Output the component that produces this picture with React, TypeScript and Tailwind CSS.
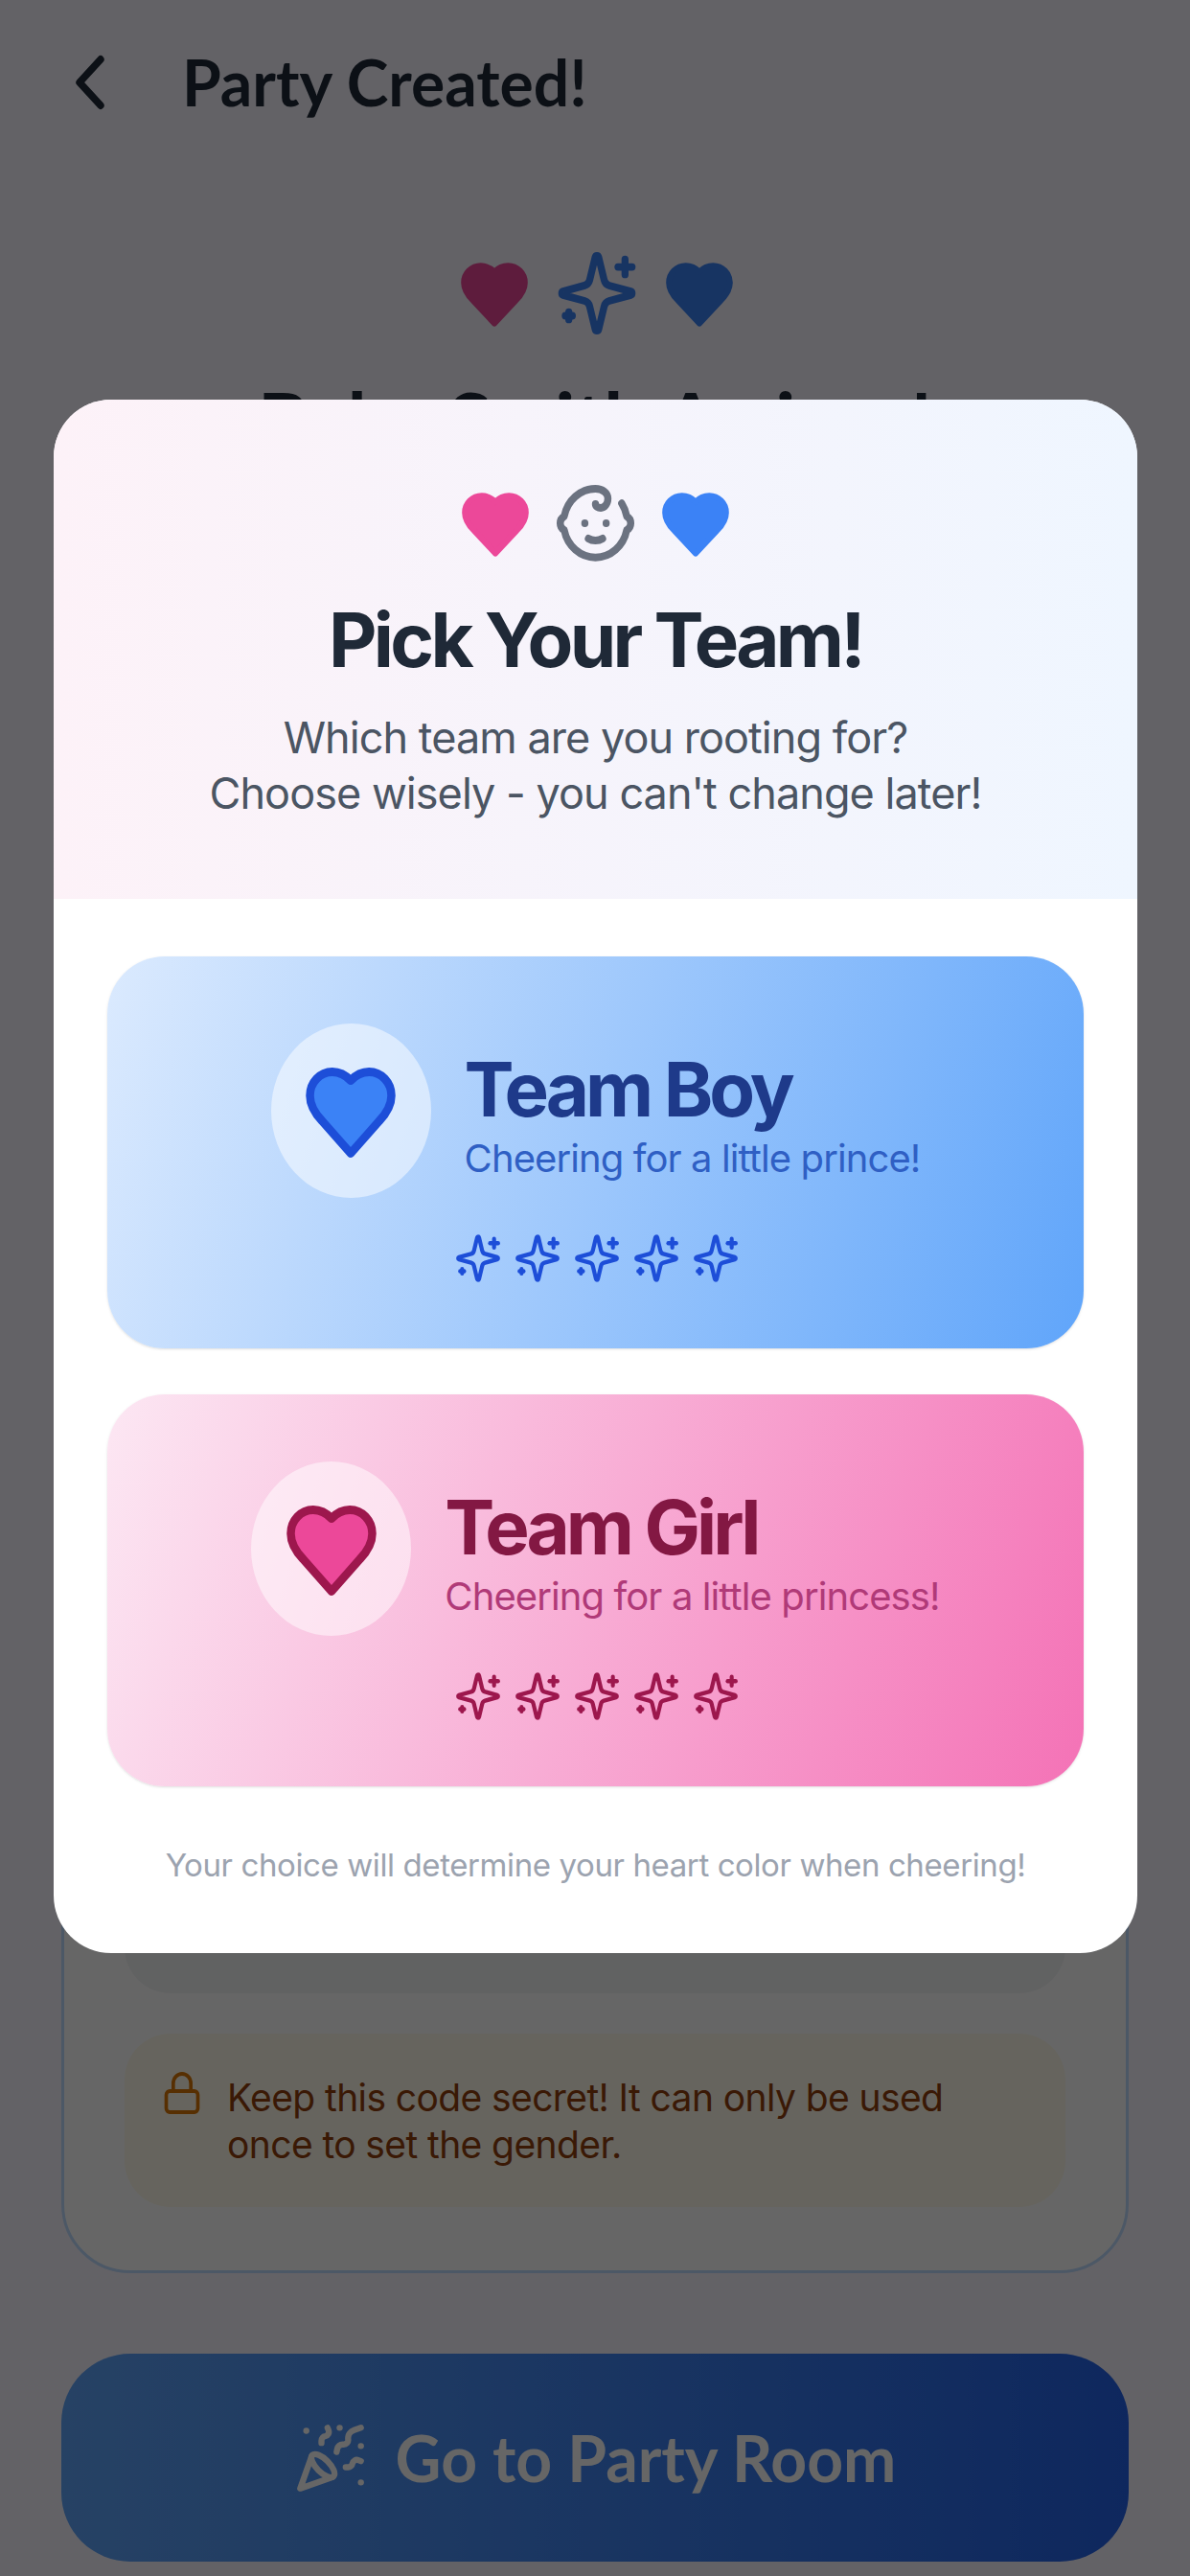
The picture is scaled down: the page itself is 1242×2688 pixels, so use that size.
import { Baby, Lock, PartyPopper } from "lucide-react";

const HEART =
  "M12 21.9 5 14.4C3.5 12.9 2 11.1 2 8.5A5.5 5.5 0 0 1 7.5 3C9.26 3 10.5 3.5 12 5 13.5 3.5 14.74 3 16.5 3A5.5 5.5 0 0 1 22 8.5C22 11.1 20.5 12.9 19 14.4Z";

function Heart({ className }: { className: string }) {
  return (
    <svg viewBox="0 0 24 24" preserveAspectRatio="none" strokeWidth={2} strokeLinejoin="round" strokeLinecap="round" className={className}>
      <path d={HEART} />
    </svg>
  );
}

function Sparkle({ className }: { className: string }) {
  return (
    <svg viewBox="0 0 24 24" preserveAspectRatio="none" fill="none" stroke="currentColor" strokeWidth={2} strokeLinejoin="round" strokeLinecap="round" className={className}>
      <path d="M9.937 15.5A2 2 0 0 0 8.5 14.063l-6.135-1.582a.5.5 0 0 1 0-.962L8.5 9.936A2 2 0 0 0 9.937 8.5l1.582-6.135a.5.5 0 0 1 .963 0L14.063 8.5A2 2 0 0 0 15.5 9.937l6.135 1.581a.5.5 0 0 1 0 .964L15.5 14.063a2 2 0 0 0-1.437 1.437l-1.582 6.135a.5.5 0 0 1-.963 0z" />
      <path d="M20 3v4" />
      <path d="M22 5h-4" />
      <path d="M4 17v2" />
      <path d="M5 18H3" />
    </svg>
  );
}

function Stars({ className }: { className: string }) {
  return (
    <div className="ml-[3px] flex items-center justify-center gap-[12px]">
      {[0, 1, 2, 3, 4].map((i) => (
        <Sparkle key={i} className={className} />
      ))}
    </div>
  );
}

function TeamCard({
  gradient,
  heart,
  title,
  titleColor,
  sub,
  subColor,
  star,
}: {
  gradient: string;
  heart: string;
  title: string;
  titleColor: string;
  sub: string;
  subColor: string;
  star: string;
}) {
  return (
    <div className={`flex h-[409px] w-full flex-col items-center gap-[36px] rounded-[60px] pt-[70px] shadow-sm ${gradient}`}>
      <div className="flex items-center gap-[35px]">
        <div className="flex h-[182px] w-[167px] items-center justify-center rounded-[50%] bg-white/50">
          <Heart className={heart} />
        </div>
        <div className="mt-[12px] flex flex-col">
          <div className={`text-[78px] leading-[88px] font-bold tracking-[-4px] ${titleColor}`}>{title}</div>
          <div className={`text-[40px] leading-[56px] tracking-[-0.9px] ${subColor}`}>{sub}</div>
        </div>
      </div>
      <Stars className={star} />
    </div>
  );
}

export default function App() {
  return (
    <div className="relative h-[2688px] w-[1242px] overflow-hidden bg-[#f8f5ff] font-['Inter',sans-serif]">
      {/* Page underneath */}
      <div className="flex h-full flex-col px-[64px] pb-[15px]">
        <header className="-ml-[14px] mt-[38px] flex h-[96px] items-center gap-[52px]">
          <svg viewBox="0 0 24 24" preserveAspectRatio="none" fill="none" stroke="#1f2937" strokeWidth={2} strokeLinecap="round" strokeLinejoin="round" className="h-[96px] w-[88px]">
            <path d="m15 18-6-6 6-6" />
          </svg>
          <h1 className="font-['Lato',sans-serif] text-[66px] leading-none font-bold text-[#1f2937]">Party Created!</h1>
        </header>
        <div className="mt-[125px] ml-[3px] flex items-center justify-center gap-[25px]">
          <Heart className="h-[76px] w-[76px] fill-[#ec4899] stroke-[#ec4899]" />
          <Sparkle className="h-[94px] w-[88px] text-[#3b82f6]" />
          <Heart className="h-[76px] w-[76px] fill-[#3b82f6] stroke-[#3b82f6]" />
        </div>
        <h2 className="mt-[34px] text-center font-['Lato',sans-serif] text-[81px] leading-[100px] font-bold whitespace-nowrap text-[#1f2937]">Baby Smith Arrives!</h2>
        <div className="mt-[118px] flex min-h-0 flex-1 flex-col rounded-[72px] border-[3px] border-[#bfdbfe] bg-white px-[63px] pt-[60px] pb-[66px]">
          <div className="min-h-0 flex-1 rounded-[48px] bg-[#f3f4f6]" />
          <div className="mt-[42px] flex h-[181px] gap-[25px] rounded-[48px] bg-[#fffbeb] px-[38px] pt-[42px]">
            <Lock className="-mt-[4px] h-[48px] w-[44px] shrink-0 text-[#d97706]" preserveAspectRatio="none" strokeWidth={2} />
            <p className="text-[39px] leading-[49px] tracking-[-0.6px] text-[#92400e]">Keep this code secret! It can only be used once to set the gender.</p>
          </div>
        </div>
        <button className="mt-[84px] flex h-[217px] shrink-0 items-center justify-center gap-[30px] rounded-[72px] bg-gradient-to-r from-[#60a5fa] to-[#2563eb] font-['Lato',sans-serif] text-[66px] font-bold text-white">
          <PartyPopper className="h-[76px] w-[76px]" strokeWidth={2} />
          Go to Party Room
        </button>
      </div>

      {/* Dim layer */}
      <div className="absolute inset-0 bg-black/60" />

      {/* Modal */}
      <div className="absolute top-[417px] left-[56px] w-[1131px] overflow-hidden rounded-[60px] bg-white">
        <div className="flex h-[521px] flex-col items-center bg-gradient-to-r from-[#fdf2f8] to-[#eff6ff] pt-[81px]">
          <div className="flex items-center justify-center gap-[22px]">
            <Heart className="h-[76px] w-[76px] fill-[#ec4899] stroke-[#ec4899]" />
            <Baby className="h-[96px] w-[89px] text-[#6b7280]" preserveAspectRatio="none" strokeWidth={2} />
            <Heart className="h-[76px] w-[76px] fill-[#3b82f6] stroke-[#3b82f6]" />
          </div>
          <h2 className="mt-[29px] text-[78px] leading-[90px] font-bold tracking-[-3.7px] text-[#1f2937]">Pick Your Team!</h2>
          <p className="mt-[28px] text-center text-[45px] leading-[58px] tracking-[-0.95px] text-[#4b5563]">
            Which team are you rooting for?
            <br />
            Choose wisely - you can't change later!
          </p>
        </div>
        <div className="flex flex-col items-center gap-[48px] px-[56px] pt-[60px]">
          <TeamCard
            gradient="bg-[linear-gradient(108deg,#dbeafe,#60a5fa)]"
            heart="h-[108px] w-[102px] fill-[#3b82f6] stroke-[#1d4ed8]"
            title="Team Boy"
            titleColor="text-[#1e3a8a]"
            sub="Cheering for a little prince!"
            subColor="text-[#2f5fc4]"
            star="h-[54px] w-[50px] text-[#1d4ed8]"
          />
          <TeamCard
            gradient="bg-[linear-gradient(108deg,#fce7f3,#f472b6)]"
            heart="h-[108px] w-[102px] fill-[#ec4899] stroke-[#9d174d]"
            title="Team Girl"
            titleColor="text-[#831843]"
            sub="Cheering for a little princess!"
            subColor="text-[#b03a78]"
            star="h-[54px] w-[50px] text-[#9d174d]"
          />
        </div>
        <p className="pt-[58px] pb-[68px] text-center text-[33px] leading-[48px] tracking-[-0.4px] text-[#9ca3af]">Your choice will determine your heart color when cheering!</p>
      </div>
    </div>
  );
}
